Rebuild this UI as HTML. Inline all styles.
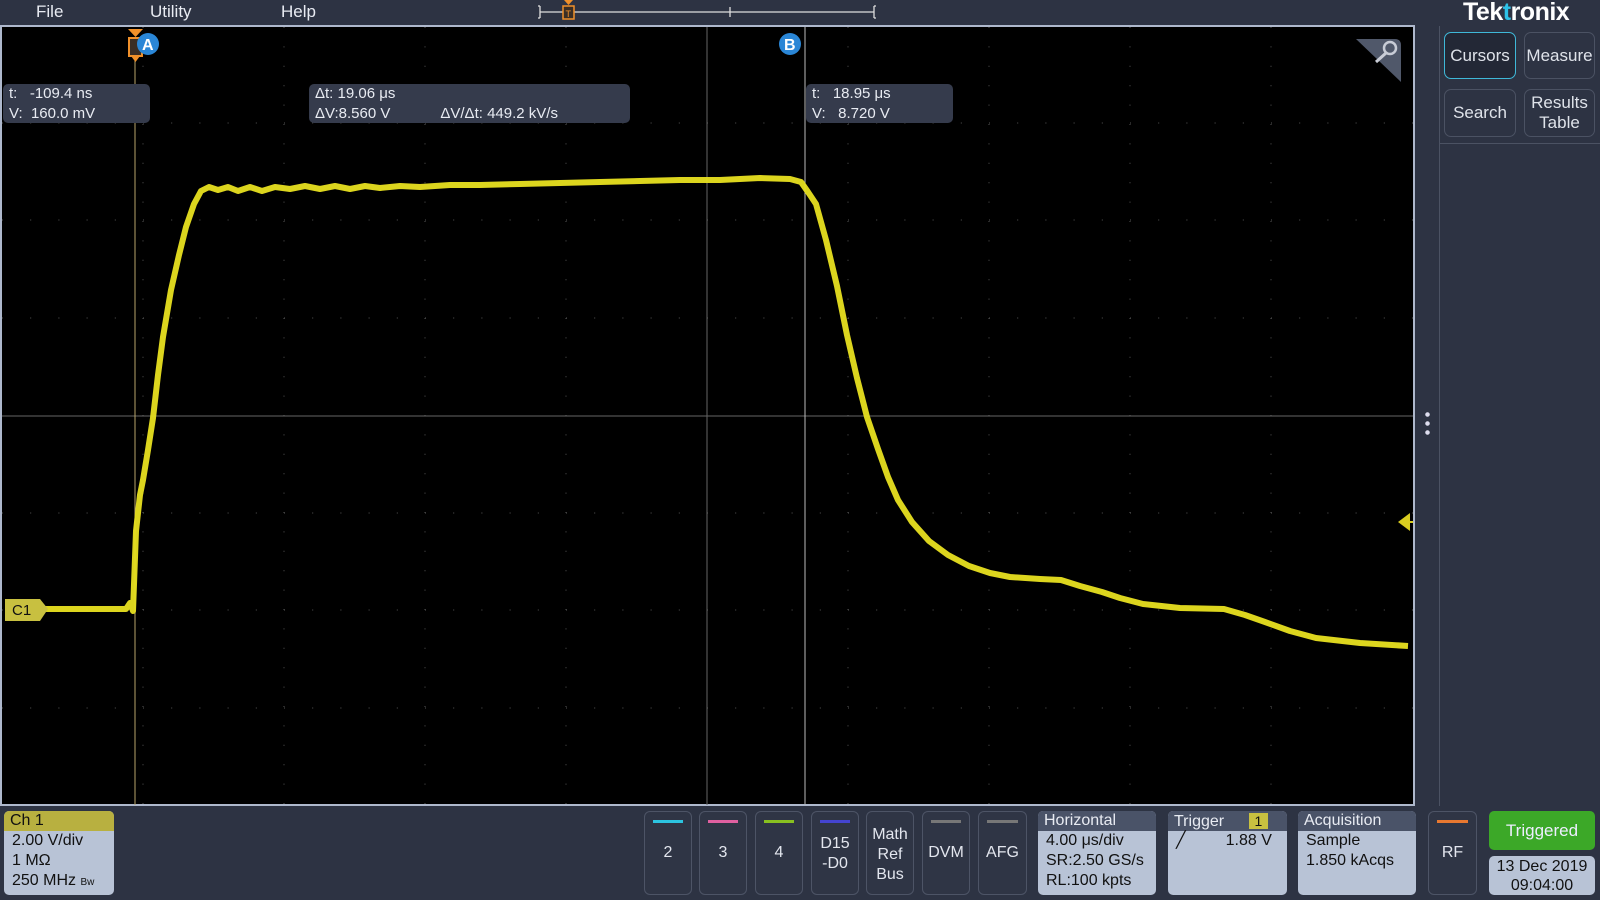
<!DOCTYPE html>
<html><head><meta charset="utf-8"><style>
*{margin:0;padding:0;box-sizing:border-box}
body{width:1600px;height:900px;background:#2d3343;font-family:"Liberation Sans",sans-serif;overflow:hidden;position:relative;color:#e6e9f0}
.a{position:absolute}
.menu{font-size:17px;color:#e8ebf2;top:2px}
.ro{background:#353b4c;border-radius:5px;font-size:15px;color:#e8ebf2;line-height:20px;padding:0 6px}
.btn{border:1px solid #4b5263;border-radius:7px;font-size:17px;color:#dfe3ea;display:flex;align-items:center;justify-content:center;text-align:center;line-height:20px}
.bb{border:1px solid #4d5466;border-radius:6px;background:#2f3545;color:#e3e6ee;font-size:16px;text-align:center}
.bar{position:absolute;top:8px;left:8px;right:8px;height:3px}
.pn{border-radius:5px;overflow:hidden;background:#b8c3d6;color:#111;font-size:16px}
.pn .h{background:#4a5368;color:#e8ebf2;height:20px;line-height:20px;padding-left:6px}
</style></head><body>
<div class="a menu" style="left:36px">File</div>
<div class="a menu" style="left:150px">Utility</div>
<div class="a menu" style="left:281px">Help</div>
<svg class="a" style="left:530px;top:0" width="360" height="26">
<path d="M10 6V18M8 6H10M8 18H10M10 12H344M344 6V18M346 6H344M346 18H344M200 7V17" stroke="#ddd" stroke-width="1.3" fill="none"/>
<rect x="33" y="6" width="11" height="13" fill="#3a2e25" stroke="#f0902a" stroke-width="1.5"/><path d="M34 0H43L38.5 5Z" fill="#f0902a"/><text x="35.5" y="17" font-size="9" fill="#f0902a" font-family="Liberation Sans">T</text>
</svg>
<div class="a" style="left:1463px;top:-2px;font-size:25px;font-weight:bold;color:#fff;letter-spacing:-0.5px">Tek<span style="color:#2ec2e8">t</span>ronix</div>

<svg class="a" style="left:0;top:25px" width="1416" height="782">
<rect x="1" y="1" width="1413" height="779" fill="#000" stroke="#aeb8cc" stroke-width="2"/>
<g stroke="#555" stroke-width="1" stroke-dasharray="1 27.2">
<line x1="2" y1="98" x2="1413" y2="98"/><line x1="2" y1="195" x2="1413" y2="195"/><line x1="2" y1="293" x2="1413" y2="293"/><line x1="2" y1="488" x2="1413" y2="488"/><line x1="2" y1="585" x2="1413" y2="585"/><line x1="2" y1="683" x2="1413" y2="683"/>
</g>
<g stroke="#555" stroke-width="1" stroke-dasharray="1 18.4">
<line x1="143" y1="2" x2="143" y2="780"/><line x1="284" y1="2" x2="284" y2="780"/><line x1="425" y1="2" x2="425" y2="780"/><line x1="566" y1="2" x2="566" y2="780"/><line x1="848" y1="2" x2="848" y2="780"/><line x1="989" y1="2" x2="989" y2="780"/><line x1="1130" y1="2" x2="1130" y2="780"/><line x1="1271" y1="2" x2="1271" y2="780"/>
</g>
<line x1="2" y1="391" x2="1413" y2="391" stroke="#666"/>
<line x1="707" y1="2" x2="707" y2="780" stroke="#666"/>
<line x1="135" y1="20" x2="135" y2="780" stroke="#b8a56a"/>
<line x1="805" y1="2" x2="805" y2="780" stroke="#bbb"/>
<path d="M1356 14H1395Q1401 14 1401 20V57Z" fill="#50586a"/>
<circle cx="1390" cy="23" r="6" fill="none" stroke="#c8ccd6" stroke-width="2.5"/><line x1="1386" y1="28" x2="1376" y2="37" stroke="#c8ccd6" stroke-width="3"/>
<path d="M128 4H143L135.5 12Z" fill="#f0902a"/><rect x="129" y="13" width="13" height="18" fill="#3a2e25" stroke="#f0902a" stroke-width="2"/><path d="M131 31L135.5 37L140 31Z" fill="#f0902a"/>
<circle cx="148" cy="19" r="11" fill="#2a86d6"/><text x="142" y="25" font-size="16" font-weight="bold" fill="#fff" font-family="Liberation Sans">A</text>
<circle cx="790" cy="19" r="11" fill="#2a86d6"/><text x="784" y="25" font-size="16" font-weight="bold" fill="#fff" font-family="Liberation Sans">B</text>
<path d="M1398 497L1410 488V506Z" fill="#d8cc20"/><line x1="1404" y1="497" x2="1413" y2="497" stroke="#d8cc20" stroke-width="2"/>
<g fill="none" stroke="#e8e020" stroke-width="6" stroke-linejoin="round" opacity="0.95">
<path d="M5 584L126 584L130 578L133 586L136 506L140 470L143 455L148 425L153 393L158 350L163 312L171 265L179 230L186 202L194 179L201 166L209 162L218 165L228 162L238 166L250 162L262 166L275 162L290 164L305 161L320 164L335 161L350 164L365 161L380 163L400 161L420 162L450 160L480 160L520 159L560 158L600 157L640 156L680 155L720 155L760 153L790 154L801 157L808 167L816 179L826 215L837 261L847 310L857 353L867 392L878 424L888 452L898 475L912 497L929 516L948 530L969 541L990 548L1010 552L1040 554L1061 555L1080 561L1102 567L1120 573L1143 579L1180 583L1224 584L1245 590L1265 597L1290 606L1316 613L1360 618L1408 621"/>
</g>
<path d="M5 574H40L48 584L40 596H5Z" fill="#c8c040"/><text x="12" y="590" font-size="15" fill="#111" font-family="Liberation Sans">C1</text>
</svg>

<div class="a ro" style="left:3px;top:84px;width:147px;height:39px">t: &nbsp;&nbsp;-109.4 ns<br>V: &nbsp;160.0 mV</div>
<div class="a ro" style="left:309px;top:84px;width:321px;height:39px">Δt: 19.06 μs<br>ΔV:8.560 V<span style="margin-left:50px">ΔV/Δt: 449.2 kV/s</span></div>
<div class="a ro" style="left:806px;top:84px;width:147px;height:39px">t: &nbsp;&nbsp;18.95 μs<br>V: &nbsp;&nbsp;8.720 V</div>

<div class="a" style="left:1425px;top:410px;width:5px;height:26px;background:radial-gradient(circle,#dde 2px,transparent 2.5px) 0 0/5px 9px"></div>
<div class="a" style="left:1439px;top:26px;width:1px;height:780px;background:#4b5263"></div>
<div class="a" style="left:1440px;top:143px;width:160px;height:1px;background:#4b5263"></div>
<div class="a btn" style="left:1444px;top:32px;width:72px;height:47px;border-color:#3fb8d8;background:#232836">Cursors</div>
<div class="a btn" style="left:1524px;top:32px;width:71px;height:47px">Measure</div>
<div class="a btn" style="left:1444px;top:89px;width:72px;height:48px">Search</div>
<div class="a btn" style="left:1524px;top:89px;width:71px;height:48px">Results<br>Table</div>

<div class="a pn" style="left:4px;top:811px;width:110px;height:84px;line-height:20px"><div class="h" style="background:#b8b040;color:#111">Ch 1</div><div style="padding-left:8px">2.00 V/div<br>1 MΩ<br>250 MHz <span style="font-size:10px">Bw</span></div></div>

<div class="a bb" style="left:644px;top:811px;width:48px;height:84px"><div class="bar" style="background:#2cc4e0"></div><div style="margin-top:32px">2</div></div>
<div class="a bb" style="left:699px;top:811px;width:48px;height:84px"><div class="bar" style="background:#e060a0"></div><div style="margin-top:32px">3</div></div>
<div class="a bb" style="left:755px;top:811px;width:48px;height:84px"><div class="bar" style="background:#88c020"></div><div style="margin-top:32px">4</div></div>
<div class="a bb" style="left:811px;top:811px;width:48px;height:84px;line-height:20px"><div class="bar" style="background:#4444d0"></div><div style="margin-top:22px">D15<br>-D0</div></div>
<div class="a bb" style="left:866px;top:811px;width:48px;height:84px;line-height:20px"><div style="margin-top:13px">Math<br>Ref<br>Bus</div></div>
<div class="a bb" style="left:922px;top:811px;width:48px;height:84px"><div class="bar" style="background:#777"></div><div style="margin-top:32px">DVM</div></div>
<div class="a bb" style="left:978px;top:811px;width:49px;height:84px"><div class="bar" style="background:#777"></div><div style="margin-top:32px">AFG</div></div>

<div class="a pn" style="left:1038px;top:811px;width:118px;height:84px;line-height:20px"><div class="h">Horizontal</div><div style="padding-left:8px">4.00 μs/div<br>SR:2.50 GS/s<br>RL:100 kpts</div></div>
<div class="a pn" style="left:1168px;top:811px;width:119px;height:84px;line-height:20px"><div class="h">Trigger <span style="background:#c8c040;color:#111;padding:0 6px;margin-left:20px;font-size:14px">1</span></div><div style="padding-left:8px">╱<span style="margin-left:40px">1.88 V</span></div></div>
<div class="a pn" style="left:1298px;top:811px;width:118px;height:84px;line-height:20px"><div class="h">Acquisition</div><div style="padding-left:8px">Sample<br>1.850 kAcqs</div></div>
<div class="a bb" style="left:1428px;top:811px;width:49px;height:84px"><div class="bar" style="background:#e87830"></div><div style="margin-top:32px">RF</div></div>
<div class="a" style="left:1489px;top:811px;width:106px;height:39px;background:#3ca828;border-radius:5px;color:#eef;font-size:17px;text-align:center;line-height:39px">Triggered</div>
<div class="a pn" style="left:1489px;top:856px;width:106px;height:39px;text-align:center;line-height:19px;padding-top:1px">13 Dec 2019<br>09:04:00</div>
</body></html>
